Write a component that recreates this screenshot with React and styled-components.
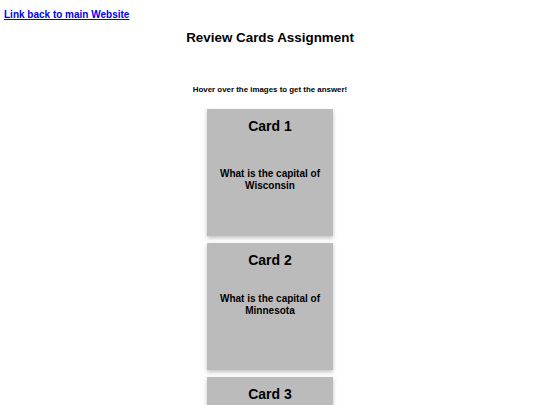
import React from 'react';
import styled, { createGlobalStyle } from 'styled-components';

const GlobalStyle = createGlobalStyle`
  body {
    margin: 4px;
    font-family: "Liberation Sans", Arial, sans-serif;
    background: #ffffff;
  }
`;

const BackLink = styled.a`
  display: inline-block;
  margin-top: 2px;
  font-size: 10px;
  font-weight: bold;
  color: #0000ee;
  text-decoration: underline;
`;

const Title = styled.h1`
  margin: 8px 0 0;
  text-align: center;
  font-size: 13.4px;
  font-weight: bold;
  color: #000;
`;

const Hint = styled.p`
  margin: 40px 0 0;
  text-align: center;
  font-size: 7.9px;
  font-weight: bold;
  color: #000;
`;

const CardList = styled.div`
  display: flex;
  flex-direction: column;
  align-items: center;
  gap: 7px;
  margin-top: 15px;
`;

const Card = styled.div`
  width: 126px;
  height: 127px;
  background: #bbbbbb;
  box-shadow: 0 2px 4px rgba(0, 0, 0, 0.25);
  text-align: center;
  color: #000;
`;

const CardTitle = styled.h2`
  margin: 0;
  padding-top: 9px;
  font-size: 14px;
  font-weight: bold;
`;

const Question = styled.p`
  margin: ${(p) => p.$offset}px 8px 0;
  font-size: 10px;
  font-weight: bold;
  line-height: 12px;
`;

const cards = [
  { title: 'Card 1', question: 'What is the capital of Wisconsin', offset: 34 },
  { title: 'Card 2', question: 'What is the capital of Minnesota', offset: 25 },
  { title: 'Card 3', question: 'What is the capital of Illinois', offset: 30 },
];

const App = () => (
  <>
    <GlobalStyle />
    <BackLink href="#">Link back to main Website</BackLink>
    <Title>Review Cards Assignment</Title>
    <Hint>Hover over the images to get the answer!</Hint>
    <CardList>
      {cards.map((c) => (
        <Card key={c.title}>
          <CardTitle>{c.title}</CardTitle>
          <Question $offset={c.offset}>{c.question}</Question>
        </Card>
      ))}
    </CardList>
  </>
);

export default App;
